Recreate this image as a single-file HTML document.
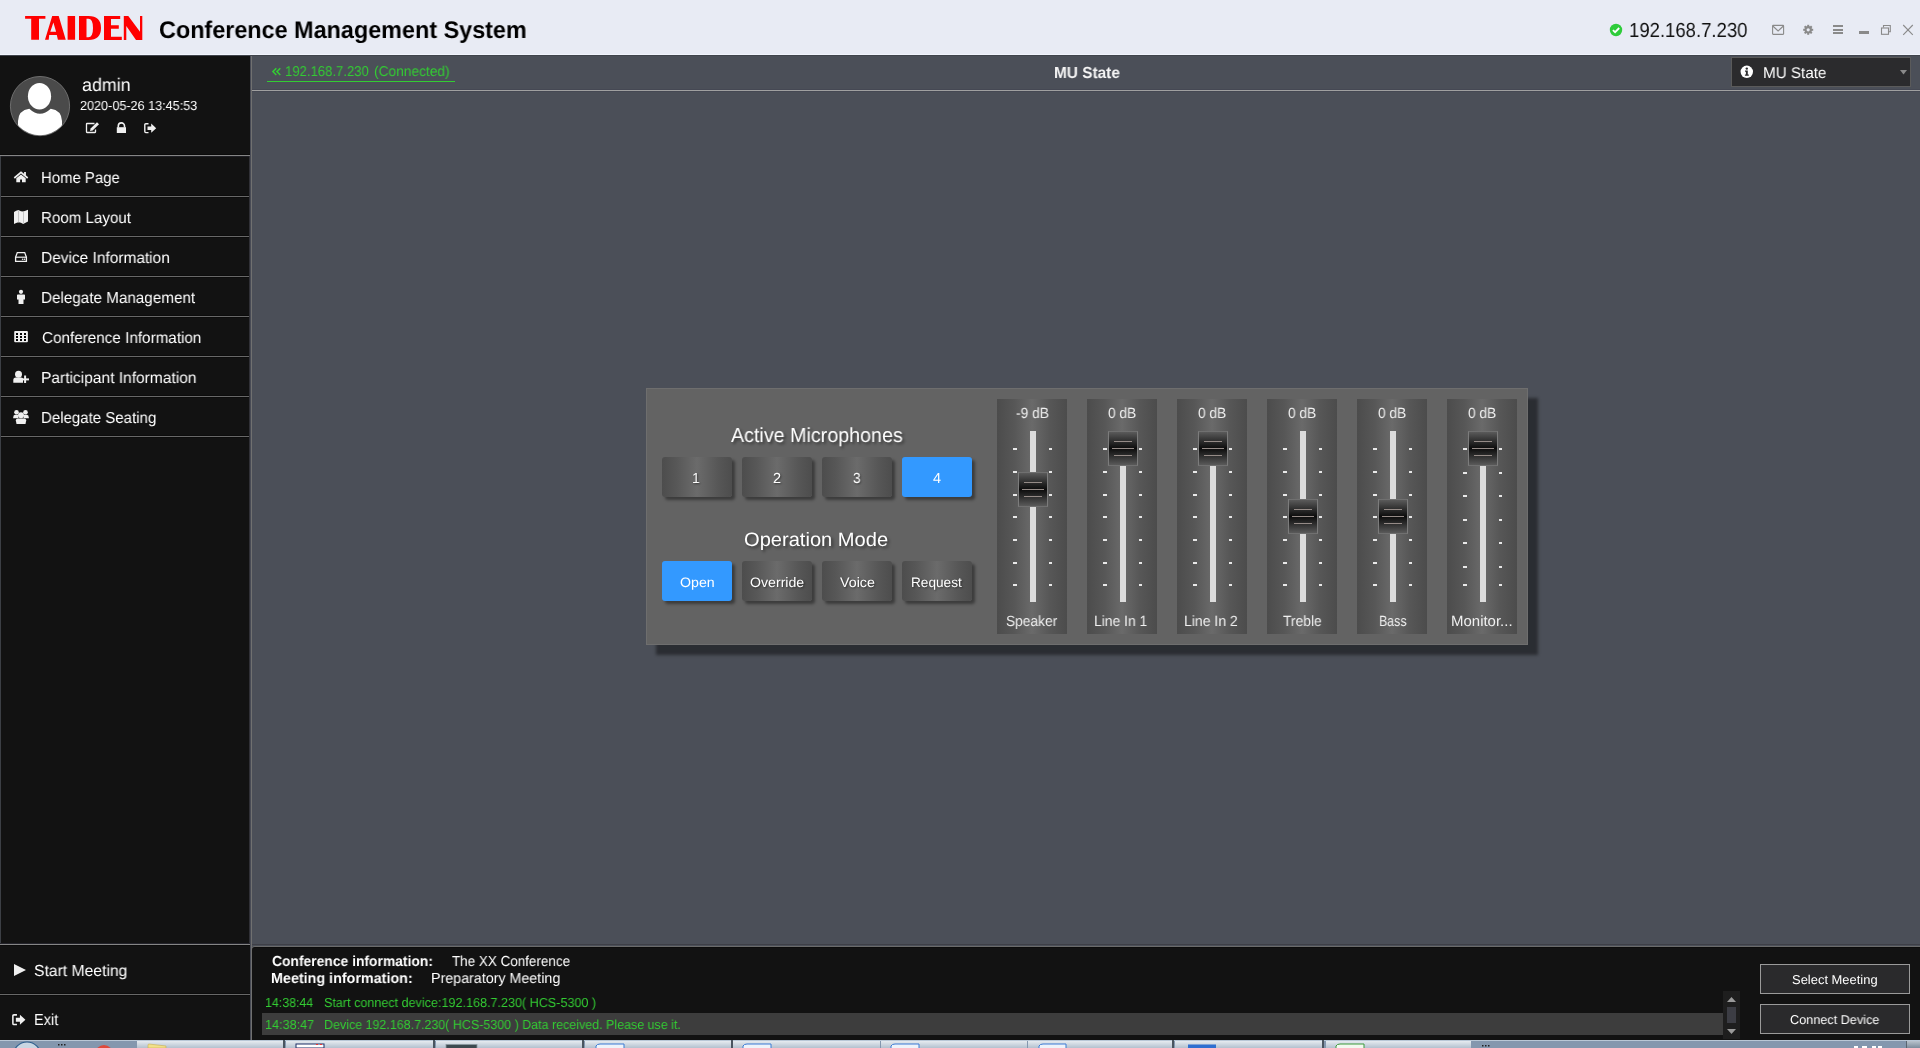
<!DOCTYPE html>
<html><head><meta charset="utf-8"><style>
*{margin:0;padding:0;box-sizing:border-box}
html,body{width:1920px;height:1048px;overflow:hidden;background:#4b4f58;font-family:"Liberation Sans",sans-serif}
.a{position:absolute}
.t{position:absolute;white-space:nowrap;line-height:1;transform-origin:0 0;will-change:transform;text-rendering:geometricPrecision}
svg{position:absolute;overflow:visible}
.btn{position:absolute;width:70px;height:40px;border-radius:3px;
 background:linear-gradient(90deg,#4d4d4d 0%,#575757 20%,#6b6b6b 50%,#575757 80%,#4d4d4d 100%);
 box-shadow:3px 3px 3px rgba(0,0,0,.4)}
.blue{background:#3399ff}
.strip{position:absolute;top:399px;width:70px;height:235px;
 background:linear-gradient(90deg,#4c4c4c 0%,#575757 25%,#6a6a6a 50%,#575757 75%,#4c4c4c 100%)}
.track{position:absolute;top:431px;width:6px;height:171px;background:#dcdcdc}
.tick{position:absolute;width:4px;height:2px;background:#e8e8e8}
.knob{position:absolute;width:30px;height:35px;border:1px solid #707070;border-left-color:#7c7c7c;border-right-color:#7c7c7c;
 background:linear-gradient(180deg,#5a5a5a 0%,#2a2a2a 30%,#0c0c0c 50%,#2a2a2a 70%,#5a5a5a 100%)}
.kl{position:absolute;left:5px;width:18px;height:1px;background:#958b87}
.sep{position:absolute;left:1px;width:248px;height:1px;background:#686868}
.tb{position:absolute;top:1041px;height:7px;background:linear-gradient(180deg,#e6ebf0,#b4c1cf)}
</style></head><body>
<div class="a" style="left:0;top:0;width:1920px;height:54px;background:#e8ebf4"></div>
<div class="a" style="left:0;top:54px;width:1920px;height:1px;background:#f2f5fd"></div>
<div class="a" style="left:0;top:55px;width:1920px;height:1px;background:#40444c"></div>
<div class="a" style="left:0;top:56px;width:250px;height:984px;background:#121212"></div>
<div class="a" style="left:250px;top:56px;width:1px;height:984px;background:#484b55"></div>
<div class="a" style="left:251px;top:56px;width:1px;height:984px;background:#707070"></div>
<div class="a" style="left:0;top:154px;width:250px;height:1px;background:#0b0b0b"></div>
<div class="a" style="left:0;top:155px;width:250px;height:1px;background:#858585"></div>
<div class="a" style="left:0;top:156px;width:249px;height:1px;background:#1f1f24"></div>
<div class="a" style="left:0;top:156px;width:1px;height:788px;background:#3c3f45"></div>
<div class="a" style="left:249px;top:156px;width:1px;height:788px;background:#303036"></div>
<div class="sep" style="top:195px;background:#0c0c0c"></div>
<div class="sep" style="top:196px"></div>
<div class="sep" style="top:197px;background:#0c0c0c"></div>
<div class="sep" style="top:235px;background:#0c0c0c"></div>
<div class="sep" style="top:236px"></div>
<div class="sep" style="top:237px;background:#0c0c0c"></div>
<div class="sep" style="top:275px;background:#0c0c0c"></div>
<div class="sep" style="top:276px"></div>
<div class="sep" style="top:277px;background:#0c0c0c"></div>
<div class="sep" style="top:315px;background:#0c0c0c"></div>
<div class="sep" style="top:316px"></div>
<div class="sep" style="top:317px;background:#0c0c0c"></div>
<div class="sep" style="top:355px;background:#0c0c0c"></div>
<div class="sep" style="top:356px"></div>
<div class="sep" style="top:357px;background:#0c0c0c"></div>
<div class="sep" style="top:395px;background:#0c0c0c"></div>
<div class="sep" style="top:396px"></div>
<div class="sep" style="top:397px;background:#0c0c0c"></div>
<div class="sep" style="top:435px;background:#0c0c0c"></div>
<div class="sep" style="top:436px"></div>
<div class="sep" style="top:437px;background:#0c0c0c"></div>
<div class="a" style="left:0;top:943px;width:250px;height:1px;background:#23232a"></div>
<div class="a" style="left:0;top:944px;width:250px;height:1px;background:#858585"></div>
<div class="a" style="left:0;top:945px;width:250px;height:1px;background:#0b0b0b"></div>
<div class="a" style="left:0;top:993px;width:250px;height:1px;background:#0c0c0c"></div>
<div class="a" style="left:0;top:994px;width:250px;height:1px;background:#686868"></div>
<div class="a" style="left:0;top:995px;width:250px;height:1px;background:#0c0c0c"></div>
<div class="a" style="left:252px;top:89px;width:1668px;height:1px;background:#454853"></div>
<div class="a" style="left:252px;top:90px;width:1668px;height:1px;background:#a0a0a0"></div>
<div class="a" style="left:252px;top:91px;width:1668px;height:1px;background:#454853"></div>
<div class="a" style="left:252px;top:944px;width:1668px;height:1px;background:#3e3f46"></div>
<div class="a" style="left:252px;top:946px;width:1668px;height:94px;background:#6b6b6b;border-top-left-radius:3px"></div>
<div class="a" style="left:252px;top:947px;width:1668px;height:93px;background:#121212;border-top:1px solid #0c0c0c;border-top-left-radius:3px"></div>
<div class="a" style="left:262px;top:1013px;width:1461px;height:22px;background:#3d3d3d"></div>
<div class="a" style="left:1723px;top:991px;width:17px;height:48px;background:#1e1e1e"></div>
<svg style="left:1727px;top:997px" width="9" height="5"><path d="M0 5L4.5 0L9 5Z" fill="#9a9a9a"/></svg>
<div class="a" style="left:1727px;top:1007px;width:9px;height:16px;background:#3c3d44"></div>
<svg style="left:1727px;top:1029px" width="9" height="5"><path d="M0 0L4.5 5L9 0Z" fill="#9a9a9a"/></svg>
<div class="a" style="left:1760px;top:964px;width:150px;height:30px;background:#2a2a2c;border:1px solid #9a9a9a"></div>
<div class="a" style="left:1760px;top:1004px;width:150px;height:30px;background:#2a2a2c;border:1px solid #9a9a9a"></div>
<div class="a" style="left:0;top:1040px;width:1920px;height:8px;background:#8497ae"></div>
<div class="a" style="left:0;top:1040px;width:1920px;height:1px;background:#b9c7d6"></div>
<div class="tb" style="left:137px;width:146px"></div>
<div class="tb" style="left:286px;width:147px"></div>
<div class="tb" style="left:436px;width:146px"></div>
<div class="tb" style="left:585px;width:146px"></div>
<div class="tb" style="left:733px;width:147px"></div>
<div class="tb" style="left:881px;width:146px"></div>
<div class="tb" style="left:1028px;width:144px"></div>
<div class="tb" style="left:1175px;width:147px"></div>
<div class="tb" style="left:1326px;width:145px"></div>
<div class="a" style="left:283px;top:1040px;width:2px;height:8px;background:#4a5560"></div>
<div class="a" style="left:433px;top:1040px;width:2px;height:8px;background:#4a5560"></div>
<div class="a" style="left:582px;top:1040px;width:2px;height:8px;background:#4a5560"></div>
<div class="a" style="left:731px;top:1040px;width:2px;height:8px;background:#4a5560"></div>
<div class="a" style="left:1172px;top:1040px;width:2px;height:8px;background:#4a5560"></div>
<div class="a" style="left:1322px;top:1040px;width:2px;height:8px;background:#4a5560"></div>
<div class="a" style="left:1906px;top:1041px;width:14px;height:7px;background:linear-gradient(180deg,#b8c2cc,#7d8c9c);border-left:1px solid #5a6570"></div>
<svg style="left:0;top:1040px" width="140" height="8" viewBox="0 1040 140 8"><circle cx="27" cy="1056" r="14" fill="#c9d6e2" stroke="#2c5d8c" stroke-width="1.2"/><rect x="58" y="1044" width="1.5" height="1.5" fill="#222"/><rect x="61" y="1044" width="1.5" height="1.5" fill="#222"/><rect x="64" y="1044" width="1.5" height="1.5" fill="#222"/><circle cx="104" cy="1054" r="9" fill="#de4a3c"/></svg>
<svg style="left:137px;top:1040px" width="1800" height="8" viewBox="137 1040 1800 8"><path d="M148 1048 V1045 Q148 1044 149 1044 L166 1046 V1048Z" fill="#f1e08a" stroke="#c9b050" stroke-width="0.6"/><rect x="296" y="1044" width="28" height="4" fill="#fff" stroke="#1d2f66" stroke-width="1"/><rect x="316" y="1044" width="2" height="1" fill="#e33"/><rect x="320" y="1044" width="2" height="1" fill="#e33"/><rect x="446" y="1044.5" width="31" height="4" fill="#3c4a50" stroke="#8a9aa0" stroke-width="0.8"/><path d="M596 1048 V1046 Q597 1044 600 1044 H624 V1048" fill="#eef3fa" stroke="#3a7bd5" stroke-width="1"/><path d="M743 1048 V1046 Q744 1044 747 1044 H771 V1048" fill="#eef3fa" stroke="#3a7bd5" stroke-width="1"/><path d="M891 1048 V1046 Q892 1044 895 1044 H919 V1048" fill="#eef3fa" stroke="#3a7bd5" stroke-width="1"/><path d="M1039 1048 V1046 Q1040 1044 1043 1044 H1066 V1048" fill="#eef3fa" stroke="#3a7bd5" stroke-width="1"/><rect x="1188" y="1044.5" width="28" height="4" fill="#2f6fd0"/><path d="M1336 1048 V1046 Q1337 1044 1340 1044 H1364 V1048" fill="#f3f8f0" stroke="#3c9a3c" stroke-width="1"/><rect x="1482" y="1045" width="1.5" height="1.5" fill="#222"/><rect x="1485" y="1045" width="1.5" height="1.5" fill="#222"/><rect x="1488" y="1045" width="1.5" height="1.5" fill="#222"/><rect x="1854" y="1046" width="4" height="2" fill="#fff"/><rect x="1862" y="1046" width="5" height="2" fill="#fff"/><rect x="1872" y="1046" width="4" height="2" fill="#fff"/><rect x="1878" y="1046" width="4" height="2" fill="#fff"/></svg>
<div class="a" style="left:1731px;top:57px;width:180px;height:30px;background:#2b2b2d;border:1px solid #5a5a5a"></div>
<svg style="left:1900px;top:70px" width="7" height="5"><path d="M0 0L7 0L3.5 4.5Z" fill="#8a8a8a"/></svg>
<svg style="left:270px;top:66px" width="14" height="12" viewBox="270 66 14 12"><path d="M276.3 68.2 L272.9 71.6 L276.3 75 M280.3 68.2 L276.9 71.6 L280.3 75" fill="none" stroke="#33cc33" stroke-width="1.5"/></svg>
<div class="a" style="left:267px;top:81px;width:188px;height:1px;background:#33cc33"></div>
<div class="a" style="left:646px;top:388px;width:882px;height:257px;background:#636363;border:1px solid #6e6e6e;box-shadow:10px 10px 3px rgba(0,0,0,.43)"></div>
<div class="btn" style="left:662px;top:457px"></div>
<div class="btn" style="left:742px;top:457px"></div>
<div class="btn" style="left:822px;top:457px"></div>
<div class="btn blue" style="left:902px;top:457px"></div>
<div class="btn blue" style="left:662px;top:561px"></div>
<div class="btn" style="left:742px;top:561px"></div>
<div class="btn" style="left:822px;top:561px"></div>
<div class="btn" style="left:902px;top:561px"></div>
<div class="strip" style="left:997px"></div>
<div class="track" style="left:1030px"></div>
<div class="tick" style="left:1013px;top:448px"></div>
<div class="tick" style="left:1049px;top:448px;width:3px"></div>
<div class="tick" style="left:1013px;top:471px"></div>
<div class="tick" style="left:1049px;top:471px;width:3px"></div>
<div class="tick" style="left:1013px;top:494px"></div>
<div class="tick" style="left:1049px;top:494px;width:3px"></div>
<div class="tick" style="left:1013px;top:516px"></div>
<div class="tick" style="left:1049px;top:516px;width:3px"></div>
<div class="tick" style="left:1013px;top:539px"></div>
<div class="tick" style="left:1049px;top:539px;width:3px"></div>
<div class="tick" style="left:1013px;top:562px"></div>
<div class="tick" style="left:1049px;top:562px;width:3px"></div>
<div class="tick" style="left:1013px;top:584px"></div>
<div class="tick" style="left:1049px;top:584px;width:3px"></div>
<div class="knob" style="left:1018px;top:472px"><div class="kl" style="top:9px"></div><div class="kl" style="top:16px;left:3px;width:22px"></div><div class="kl" style="top:23px"></div></div>
<div class="strip" style="left:1087px"></div>
<div class="track" style="left:1120px"></div>
<div class="tick" style="left:1103px;top:448px"></div>
<div class="tick" style="left:1139px;top:448px;width:3px"></div>
<div class="tick" style="left:1103px;top:471px"></div>
<div class="tick" style="left:1139px;top:471px;width:3px"></div>
<div class="tick" style="left:1103px;top:494px"></div>
<div class="tick" style="left:1139px;top:494px;width:3px"></div>
<div class="tick" style="left:1103px;top:516px"></div>
<div class="tick" style="left:1139px;top:516px;width:3px"></div>
<div class="tick" style="left:1103px;top:539px"></div>
<div class="tick" style="left:1139px;top:539px;width:3px"></div>
<div class="tick" style="left:1103px;top:562px"></div>
<div class="tick" style="left:1139px;top:562px;width:3px"></div>
<div class="tick" style="left:1103px;top:584px"></div>
<div class="tick" style="left:1139px;top:584px;width:3px"></div>
<div class="knob" style="left:1108px;top:431px"><div class="kl" style="top:9px"></div><div class="kl" style="top:16px;left:3px;width:22px"></div><div class="kl" style="top:23px"></div></div>
<div class="strip" style="left:1177px"></div>
<div class="track" style="left:1210px"></div>
<div class="tick" style="left:1193px;top:448px"></div>
<div class="tick" style="left:1229px;top:448px;width:3px"></div>
<div class="tick" style="left:1193px;top:471px"></div>
<div class="tick" style="left:1229px;top:471px;width:3px"></div>
<div class="tick" style="left:1193px;top:494px"></div>
<div class="tick" style="left:1229px;top:494px;width:3px"></div>
<div class="tick" style="left:1193px;top:516px"></div>
<div class="tick" style="left:1229px;top:516px;width:3px"></div>
<div class="tick" style="left:1193px;top:539px"></div>
<div class="tick" style="left:1229px;top:539px;width:3px"></div>
<div class="tick" style="left:1193px;top:562px"></div>
<div class="tick" style="left:1229px;top:562px;width:3px"></div>
<div class="tick" style="left:1193px;top:584px"></div>
<div class="tick" style="left:1229px;top:584px;width:3px"></div>
<div class="knob" style="left:1198px;top:431px"><div class="kl" style="top:9px"></div><div class="kl" style="top:16px;left:3px;width:22px"></div><div class="kl" style="top:23px"></div></div>
<div class="strip" style="left:1267px"></div>
<div class="track" style="left:1300px"></div>
<div class="tick" style="left:1283px;top:448px"></div>
<div class="tick" style="left:1319px;top:448px;width:3px"></div>
<div class="tick" style="left:1283px;top:471px"></div>
<div class="tick" style="left:1319px;top:471px;width:3px"></div>
<div class="tick" style="left:1283px;top:494px"></div>
<div class="tick" style="left:1319px;top:494px;width:3px"></div>
<div class="tick" style="left:1283px;top:516px"></div>
<div class="tick" style="left:1319px;top:516px;width:3px"></div>
<div class="tick" style="left:1283px;top:539px"></div>
<div class="tick" style="left:1319px;top:539px;width:3px"></div>
<div class="tick" style="left:1283px;top:562px"></div>
<div class="tick" style="left:1319px;top:562px;width:3px"></div>
<div class="tick" style="left:1283px;top:584px"></div>
<div class="tick" style="left:1319px;top:584px;width:3px"></div>
<div class="knob" style="left:1288px;top:499px"><div class="kl" style="top:9px"></div><div class="kl" style="top:16px;left:3px;width:22px"></div><div class="kl" style="top:23px"></div></div>
<div class="strip" style="left:1357px"></div>
<div class="track" style="left:1390px"></div>
<div class="tick" style="left:1373px;top:448px"></div>
<div class="tick" style="left:1409px;top:448px;width:3px"></div>
<div class="tick" style="left:1373px;top:471px"></div>
<div class="tick" style="left:1409px;top:471px;width:3px"></div>
<div class="tick" style="left:1373px;top:494px"></div>
<div class="tick" style="left:1409px;top:494px;width:3px"></div>
<div class="tick" style="left:1373px;top:516px"></div>
<div class="tick" style="left:1409px;top:516px;width:3px"></div>
<div class="tick" style="left:1373px;top:539px"></div>
<div class="tick" style="left:1409px;top:539px;width:3px"></div>
<div class="tick" style="left:1373px;top:562px"></div>
<div class="tick" style="left:1409px;top:562px;width:3px"></div>
<div class="tick" style="left:1373px;top:584px"></div>
<div class="tick" style="left:1409px;top:584px;width:3px"></div>
<div class="knob" style="left:1378px;top:499px"><div class="kl" style="top:9px"></div><div class="kl" style="top:16px;left:3px;width:22px"></div><div class="kl" style="top:23px"></div></div>
<div class="strip" style="left:1447px"></div>
<div class="track" style="left:1480px"></div>
<div class="tick" style="left:1463px;top:448px"></div>
<div class="tick" style="left:1499px;top:448px;width:3px"></div>
<div class="tick" style="left:1463px;top:472px"></div>
<div class="tick" style="left:1499px;top:472px;width:3px"></div>
<div class="tick" style="left:1463px;top:495px"></div>
<div class="tick" style="left:1499px;top:495px;width:3px"></div>
<div class="tick" style="left:1463px;top:519px"></div>
<div class="tick" style="left:1499px;top:519px;width:3px"></div>
<div class="tick" style="left:1463px;top:542px"></div>
<div class="tick" style="left:1499px;top:542px;width:3px"></div>
<div class="tick" style="left:1463px;top:566px"></div>
<div class="tick" style="left:1499px;top:566px;width:3px"></div>
<div class="tick" style="left:1463px;top:584px"></div>
<div class="tick" style="left:1499px;top:584px;width:3px"></div>
<div class="knob" style="left:1468px;top:431px"><div class="kl" style="top:9px"></div><div class="kl" style="top:16px;left:3px;width:22px"></div><div class="kl" style="top:23px"></div></div>
<svg style="left:0;top:0" width="150" height="50" viewBox="0 0 150 50"><path fill="#ff0000" fill-rule="evenodd" d="M25.1,16H45.4V18.8H39V39.8H31.2V18.8H25.1Z M45,39.8L52.2,16H58.7L65.75,39.8H57.9L56.8,35.1H49.2L48.7,39.8Z M53.4,22.5L50.3,31.8H56.1Z M67.6,16H75.1V39.8H67.6Z M79,16H88.5Q101,16 101,28Q101,40 88.5,40H79Z M86.5,18.7H88.3Q93,18.7 93,28Q93,37.3 88.3,37.3H86.5Z M104,16H120.2V19H111V25.3H118.8V28.8H111V36.8H121.8V40H104Z M123.8,16H128.3L140,31.7V16H142.3V40H136L126.3,26V40H123.8Z"/></svg>
<svg style="left:0;top:56px" width="90" height="100" viewBox="0 56 90 100"><defs><clipPath id="avc"><circle cx="40" cy="106.1" r="29.2"/></clipPath></defs><circle cx="40" cy="106.1" r="29.6" fill="#4a4a4a" stroke="#6e6e6e" stroke-width="1"/><g clip-path="url(#avc)"><path d="M18 140 L18 121 Q18.5 110.3 29.3 108.8 Q34.6 113.8 40 113.8 Q45.4 113.8 50.7 108.8 Q61.5 110.3 62 121 L62 140Z" fill="#fff"/></g><ellipse cx="39.5" cy="96.2" rx="11.6" ry="13.25" fill="#fff"/></svg>
<svg style="left:84px;top:121px" width="18" height="14" viewBox="84 121 18 14"><path d="M94.5 123.5 H87 Q86.5 123.5 86.5 124 V132 Q86.5 132.5 87 132.5 H95 Q95.5 132.5 95.5 132 V129.5" fill="none" stroke="#f0f0f0" stroke-width="1.3"/><path d="M90 131 L90.6 128.6 L97 122.2 L99 124.2 L92.6 130.6 Z" fill="#f0f0f0"/></svg>
<svg style="left:115px;top:121px" width="13" height="14" viewBox="115 121 13 14"><path d="M118.3 127.5 V126 A3.1 3.1 0 0 1 124.5 126 V127.5" fill="none" stroke="#f0f0f0" stroke-width="1.6"/><rect x="116.8" y="127.2" width="9.2" height="5.8" fill="#f0f0f0"/></svg>
<svg style="left:143.5px;top:123.3px" width="14" height="11" viewBox="0 0 14 11"><path d="M4.5 0.8 H1.8 Q0.8 0.8 0.8 1.8 V8.6 Q0.8 9.6 1.8 9.6 H4.5" fill="none" stroke="#f0f0f0" stroke-width="1.4"/><path d="M3.5 3.4 H7.2 V0.6 L12.2 5.2 L7.2 9.8 V7 H3.5Z" fill="#f0f0f0"/></svg>
<div style="position:absolute;left:12.3px;top:1013.6px;transform:scale(1.1);transform-origin:0 0"><svg style="left:0px;top:0px" width="14" height="11" viewBox="0 0 14 11"><path d="M4.5 0.8 H1.8 Q0.8 0.8 0.8 1.8 V8.6 Q0.8 9.6 1.8 9.6 H4.5" fill="none" stroke="#f0f0f0" stroke-width="1.4"/><path d="M3.5 3.4 H7.2 V0.6 L12.2 5.2 L7.2 9.8 V7 H3.5Z" fill="#f0f0f0"/></svg></div>
<svg style="left:14px;top:964px" width="12" height="12"><path d="M0 0 L12 6 L0 12Z" fill="#f0f0f0"/></svg>
<svg style="left:13px;top:170px" width="16" height="14" viewBox="13 170 16 14"><path d="M14.3 178 L21 172.4 L27.7 178" fill="none" stroke="#f0f0f0" stroke-width="1.7" stroke-linejoin="miter"/><path d="M16.3 182.2 V178.3 L21 174.6 L25.7 178.3 V182.2 H22 V179.4 H20.1 V182.2Z" fill="#f0f0f0"/><rect x="24.1" y="172" width="1.8" height="3.6" fill="#f0f0f0"/></svg>
<svg style="left:13px;top:209px" width="16" height="16" viewBox="13 209 16 16"><path d="M14 212 Q16 210.6 18.5 210 Q21 211.6 23.2 211.6 Q25.5 211 28 209.8 V221.5 Q25.5 222.6 23.2 224 Q21 222.4 18.5 222.2 Q16 222.6 14 224Z" fill="#f0f0f0"/><rect x="18.2" y="210.5" width="0.8" height="12" fill="#bbb"/><rect x="23" y="211.5" width="0.8" height="12" fill="#bbb"/></svg>
<svg style="left:14px;top:251px" width="14" height="12" viewBox="14 251 14 12"><path d="M17.3 252.6 H24.7 L26.4 257.2 V261.3 H15.6 V257.2 Z" fill="none" stroke="#f0f0f0" stroke-width="1.3"/><path d="M15.8 257.2 H26.2" stroke="#f0f0f0" stroke-width="1.2"/><circle cx="22.6" cy="259.3" r="0.8" fill="#f0f0f0"/><circle cx="24.5" cy="259.3" r="0.8" fill="#f0f0f0"/></svg>
<svg style="left:16px;top:289px" width="10" height="16" viewBox="16 289 10 16"><circle cx="21" cy="291.8" r="2.1" fill="#f0f0f0"/><path d="M17.8 294.5 H24.2 Q25 294.5 25 295.3 V299.5 H23.5 V304 H18.5 V299.5 H17 V295.3 Q17 294.5 17.8 294.5Z" fill="#f0f0f0"/></svg>
<svg style="left:14px;top:330px" width="15" height="13" viewBox="14 330 15 13"><rect x="14.2" y="330.9" width="13.7" height="11.3" rx="1" fill="#f0f0f0"/><rect x="16" y="333" width="2" height="2" fill="#050505"/><rect x="20" y="333" width="2" height="2" fill="#050505"/><rect x="24" y="333" width="2" height="2" fill="#050505"/><rect x="16" y="336" width="2" height="2" fill="#050505"/><rect x="20" y="336" width="2" height="2" fill="#050505"/><rect x="24" y="336" width="2" height="2" fill="#050505"/><rect x="16" y="339" width="2" height="2" fill="#050505"/><rect x="20" y="339" width="2" height="2" fill="#050505"/><rect x="24" y="339" width="2" height="2" fill="#050505"/></svg>
<svg style="left:12px;top:370px" width="18" height="14" viewBox="12 370 18 14"><circle cx="18.5" cy="374.3" r="3.5" fill="#f0f0f0"/><path d="M13.3 382.8 V380 Q13.3 377.5 15.8 377.5 H20.8 Q22.5 377.5 23 378.5 V382.8Z" fill="#f0f0f0"/><rect x="24.1" y="375.5" width="2" height="7.5" fill="#f0f0f0"/><rect x="21.2" y="378.4" width="7.8" height="2" fill="#f0f0f0"/></svg>
<svg style="left:12px;top:409px" width="18" height="16" viewBox="12 409 18 16"><circle cx="16.5" cy="412.2" r="2.3" fill="#f0f0f0"/><circle cx="25.5" cy="412.2" r="2.3" fill="#f0f0f0"/><path d="M13.2 417.6 Q13.2 414.8 15 414.8 H18 L18.5 418.2 H13.2Z" fill="#f0f0f0"/><path d="M28.8 417.6 Q28.8 414.8 27 414.8 H24 L23.5 418.2 H28.8Z" fill="#f0f0f0"/><circle cx="21" cy="415.2" r="3" fill="#f0f0f0"/><path d="M16.5 424 L15.8 420.5 Q15.8 418.5 17.8 418.5 H24.2 Q26.2 418.5 26.2 420.5 L25.5 424Z" fill="#f0f0f0"/></svg>
<svg style="left:1609px;top:23px" width="14" height="14" viewBox="0 0 14 14"><circle cx="7" cy="7" r="6.2" fill="#2ecc3a"/><path d="M3.9 7.1 L6.1 9.2 L10.2 5" fill="none" stroke="#fff" stroke-width="1.8"/></svg>
<svg style="left:1771px;top:24px" width="15" height="12" viewBox="1771 24 15 12"><rect x="1772.6" y="25.4" width="11" height="9" rx="0.6" fill="none" stroke="#8a8a8a" stroke-width="1.1"/><path d="M1772.8 26 L1778.1 31 L1783.4 26" fill="none" stroke="#8a8a8a" stroke-width="1.1"/></svg>
<svg style="left:1802px;top:24px" width="13" height="12" viewBox="1802 24 13 12"><g fill="#8a8a8a"><circle cx="1808.2" cy="29.8" r="3.7"/><rect x="1807.2" y="24.8" width="2" height="2.6" transform="rotate(0 1808.2 29.8)"/><rect x="1807.2" y="24.8" width="2" height="2.6" transform="rotate(45 1808.2 29.8)"/><rect x="1807.2" y="24.8" width="2" height="2.6" transform="rotate(90 1808.2 29.8)"/><rect x="1807.2" y="24.8" width="2" height="2.6" transform="rotate(135 1808.2 29.8)"/><rect x="1807.2" y="24.8" width="2" height="2.6" transform="rotate(180 1808.2 29.8)"/><rect x="1807.2" y="24.8" width="2" height="2.6" transform="rotate(225 1808.2 29.8)"/><rect x="1807.2" y="24.8" width="2" height="2.6" transform="rotate(270 1808.2 29.8)"/><rect x="1807.2" y="24.8" width="2" height="2.6" transform="rotate(315 1808.2 29.8)"/></g><circle cx="1808.2" cy="29.8" r="1.6" fill="#e8ebf4"/></svg>
<div class="a" style="left:1833px;top:25px;width:10px;height:2px;background:#8a8a8a"></div>
<div class="a" style="left:1833px;top:29px;width:10px;height:2px;background:#8a8a8a"></div>
<div class="a" style="left:1833px;top:32px;width:10px;height:2px;background:#8a8a8a"></div>
<div class="a" style="left:1859px;top:31px;width:10px;height:3px;background:#8a8a8a"></div>
<svg style="left:1880px;top:24px" width="12" height="12" viewBox="1880 24 12 12"><rect x="1881.5" y="28" width="7" height="6.3" fill="none" stroke="#8a8a8a" stroke-width="1.1"/><path d="M1883.5 27.5 V25.5 H1890.3 V31.8 H1889" fill="none" stroke="#8a8a8a" stroke-width="1.1"/></svg>
<svg style="left:1902px;top:24px" width="12" height="12" viewBox="1902 24 12 12"><path d="M1903.2 25 L1912.8 34.8 M1912.8 25 L1903.2 34.8" stroke="#8a8a8a" stroke-width="1.1"/></svg>
<svg style="left:1740px;top:65px" width="14" height="14" viewBox="0 0 14 14"><circle cx="6.8" cy="6.8" r="6.2" fill="#fff"/><circle cx="6.8" cy="3.6" r="1.2" fill="#2b2b2d"/><path d="M5 5.6 H7.8 V9.6 H8.8 V10.8 H4.9 V9.6 H5.9 V6.8 H5Z" fill="#2b2b2d"/></svg>
<div class="t" style="left:159.23px;top:19px;font-size:24.11px;color:#000;font-weight:bold;transform:scaleX(0.9698);">Conference Management System</div>
<div class="t" style="left:1629.10px;top:21px;font-size:20.48px;color:#111;transform:scaleX(0.9047);">192.168.7.230</div>
<div class="t" style="left:284.88px;top:65px;font-size:14.23px;color:#33cc33;transform:scaleX(0.9222);">192.168.7.230</div>
<div class="t" style="left:374.43px;top:65px;font-size:14.23px;color:#33cc33;transform:scaleX(0.9662);">(Connected)</div>
<div class="t" style="left:1053.84px;top:66px;font-size:15.98px;color:#f5f5f5;font-weight:bold;transform:scaleX(0.9642);">MU State</div>
<div class="t" style="left:1762.52px;top:66px;font-size:15.54px;color:#ffffff;transform:scaleX(0.9794);">MU State</div>
<div class="t" style="left:82.00px;top:76px;font-size:18.23px;color:#ffffff;transform:scaleX(0.9796);">admin</div>
<div class="t" style="left:80.40px;top:99px;font-size:13.07px;color:#ffffff;transform:scaleX(0.9669);">2020-05-26 13:45:53</div>
<div class="t" style="left:40.56px;top:171px;font-size:15.83px;color:#ffffff;transform:scaleX(0.9427);">Home Page</div>
<div class="t" style="left:40.55px;top:211px;font-size:15.83px;color:#ffffff;transform:scaleX(0.9548);">Room Layout</div>
<div class="t" style="left:40.52px;top:251px;font-size:15.83px;color:#ffffff;transform:scaleX(0.9762);">Device Information</div>
<div class="t" style="left:40.54px;top:291px;font-size:15.83px;color:#ffffff;transform:scaleX(0.9623);">Delegate Management</div>
<div class="t" style="left:41.50px;top:331px;font-size:15.83px;color:#ffffff;transform:scaleX(0.9636);">Conference Information</div>
<div class="t" style="left:40.52px;top:371px;font-size:15.83px;color:#ffffff;transform:scaleX(0.9822);">Participant Information</div>
<div class="t" style="left:40.55px;top:411px;font-size:15.83px;color:#ffffff;transform:scaleX(0.9492);">Delegate Seating</div>
<div class="t" style="left:34.22px;top:964px;font-size:15.98px;color:#ffffff;transform:scaleX(0.9828);">Start Meeting</div>
<div class="t" style="left:34.29px;top:1013px;font-size:15.98px;color:#ffffff;transform:scaleX(0.9077);">Exit</div>
<div class="t" style="left:271.90px;top:955px;font-size:14.52px;color:#ffffff;font-weight:bold;transform:scaleX(0.9548);">Conference information:</div>
<div class="t" style="left:452.30px;top:955px;font-size:14.52px;color:#ffffff;transform:scaleX(0.9260);">The XX Conference</div>
<div class="t" style="left:271.01px;top:972px;font-size:14.52px;color:#ffffff;font-weight:bold;transform:scaleX(0.9873);">Meeting information:</div>
<div class="t" style="left:431.22px;top:972px;font-size:14.52px;color:#ffffff;transform:scaleX(0.9831);">Preparatory Meeting</div>
<div class="t" style="left:265.45px;top:996px;font-size:13.07px;color:#33cc33;transform:scaleX(0.9480);">14:38:44</div>
<div class="t" style="left:323.74px;top:996px;font-size:13.07px;color:#33cc33;transform:scaleX(0.9633);">Start connect device:192.168.7.230( HCS-5300 )</div>
<div class="t" style="left:265.43px;top:1018px;font-size:13.07px;color:#33cc33;transform:scaleX(0.9673);">14:38:47</div>
<div class="t" style="left:324.05px;top:1018px;font-size:13.07px;color:#33cc33;transform:scaleX(0.9543);">Device 192.168.7.230( HCS-5300 ) Data received. Please use it.</div>
<div class="t" style="left:1792.20px;top:974px;font-size:12.78px;color:#ffffff;transform:scaleX(1.0143);">Select Meeting</div>
<div class="t" style="left:1790.00px;top:1014px;font-size:12.78px;color:#ffffff;transform:scaleX(0.9922);">Connect Device</div>
<div class="t" style="left:731.00px;top:426px;font-size:20.33px;color:#ffffff;transform:scaleX(0.9684);text-shadow:2px 2px 3px rgba(0,0,0,.45);">Active Microphones</div>
<div class="t" style="left:744.27px;top:531px;font-size:19.46px;color:#ffffff;transform:scaleX(1.0341);text-shadow:2px 2px 3px rgba(0,0,0,.45);">Operation Mode</div>
<div class="t" style="left:692.44px;top:472px;font-size:14.52px;color:#ffffff;transform:scaleX(0.9571);text-shadow:1px 1px 2px rgba(0,0,0,.5);">1</div>
<div class="t" style="left:772.80px;top:472px;font-size:14.52px;color:#ffffff;text-shadow:1px 1px 2px rgba(0,0,0,.5);">2</div>
<div class="t" style="left:853.00px;top:472px;font-size:14.52px;color:#ffffff;transform:scaleX(0.9375);text-shadow:1px 1px 2px rgba(0,0,0,.5);">3</div>
<div class="t" style="left:932.60px;top:472px;font-size:14.52px;color:#ffffff;">4</div>
<div class="t" style="left:680.05px;top:576px;font-size:13.65px;color:#ffffff;transform:scaleX(1.0394);">Open</div>
<div class="t" style="left:749.65px;top:576px;font-size:13.65px;color:#ffffff;transform:scaleX(1.0365);text-shadow:1px 1px 2px rgba(0,0,0,.5);">Override</div>
<div class="t" style="left:839.95px;top:576px;font-size:13.65px;color:#ffffff;transform:scaleX(1.0455);text-shadow:1px 1px 2px rgba(0,0,0,.5);">Voice</div>
<div class="t" style="left:911.00px;top:576px;font-size:13.65px;color:#ffffff;text-shadow:1px 1px 2px rgba(0,0,0,.5);">Request</div>
<div class="t" style="left:1015.50px;top:407px;font-size:14.81px;color:#f0f0f0;transform:scaleX(0.9314);">-9 dB</div>
<div class="t" style="left:1107.70px;top:407px;font-size:14.81px;color:#f0f0f0;transform:scaleX(0.9267);">0 dB</div>
<div class="t" style="left:1197.70px;top:407px;font-size:14.81px;color:#f0f0f0;transform:scaleX(0.9267);">0 dB</div>
<div class="t" style="left:1287.70px;top:407px;font-size:14.81px;color:#f0f0f0;transform:scaleX(0.9267);">0 dB</div>
<div class="t" style="left:1377.70px;top:407px;font-size:14.81px;color:#f0f0f0;transform:scaleX(0.9267);">0 dB</div>
<div class="t" style="left:1467.70px;top:407px;font-size:14.81px;color:#f0f0f0;transform:scaleX(0.9267);">0 dB</div>
<div class="t" style="left:1005.77px;top:615px;font-size:14.81px;color:#f0f0f0;transform:scaleX(0.9296);">Speaker</div>
<div class="t" style="left:1094.46px;top:615px;font-size:14.81px;color:#f0f0f0;transform:scaleX(0.9382);">Line In 1</div>
<div class="t" style="left:1184.20px;top:615px;font-size:14.81px;color:#f0f0f0;transform:scaleX(0.9473);">Line In 2</div>
<div class="t" style="left:1283.40px;top:615px;font-size:14.81px;color:#f0f0f0;transform:scaleX(0.9317);">Treble</div>
<div class="t" style="left:1378.76px;top:615px;font-size:14.81px;color:#f0f0f0;transform:scaleX(0.8375);">Bass</div>
<div class="t" style="left:1450.64px;top:615px;font-size:14.81px;color:#f0f0f0;transform:scaleX(1.0119);">Monitor...</div>
</body></html>
